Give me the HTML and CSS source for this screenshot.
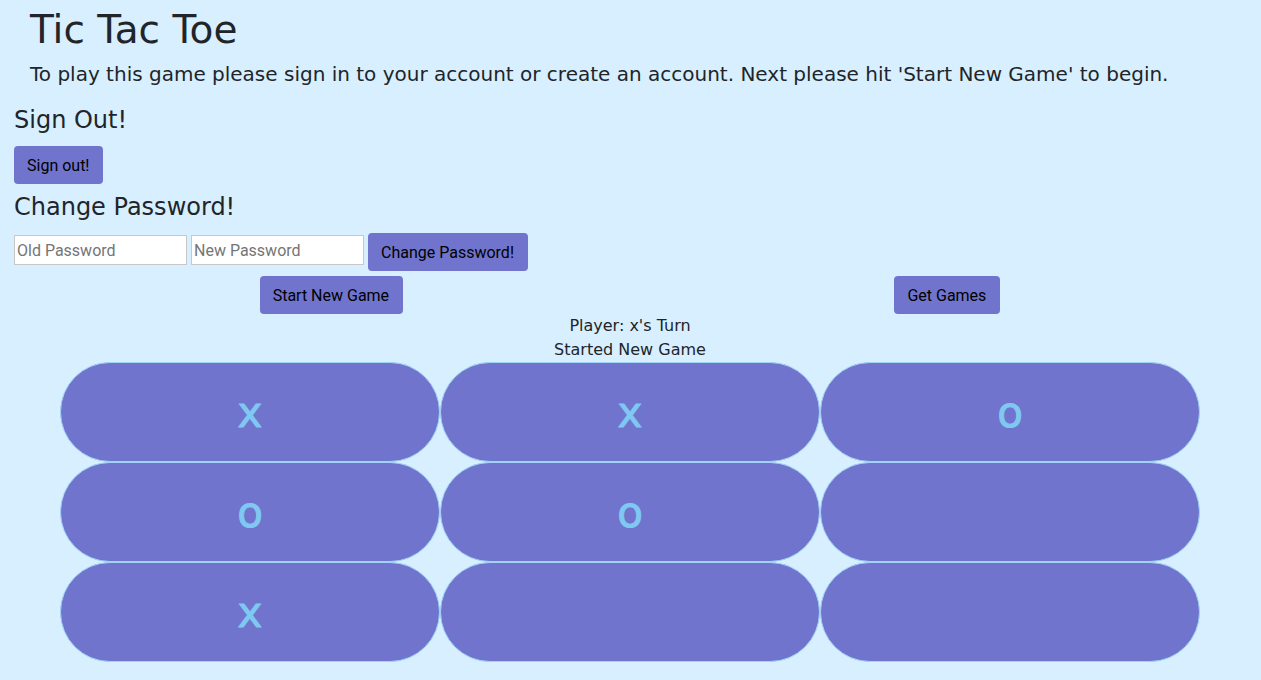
FILE: index.html
```html
<!DOCTYPE html>
<html lang="en">
<head>
<meta charset="utf-8">
<title>Tic Tac Toe</title>
<link rel="stylesheet" href="styles.css">
</head>
<body>
<header class="intro">
  <h1 class="title">Tic Tac Toe</h1>
  <p class="lead">To play this game please sign in to your account or create an account. Next please hit 'Start New Game' to begin.</p>
</header>
<main>
  <section class="account">
    <h2 class="heading">Sign Out!</h2>
    <form class="form"><button class="btn" type="button">Sign out!</button></form>
    <h2 class="heading">Change Password!</h2>
    <form class="form">
      <input class="field" type="password" placeholder="Old Password" aria-label="Old Password">
      <input class="field" type="password" placeholder="New Password" aria-label="New Password">
      <button class="btn" type="button">Change Password!</button>
    </form>
    <div class="controls">
      <button class="btn" type="button">Start New Game</button>
      <button class="btn" type="button">Get Games</button>
    </div>
  </section>
  <div class="status">
    <p class="message">Player: x's Turn</p>
    <p class="message">Started New Game</p>
  </div>
  <div class="board">
    <button class="cell" type="button">x</button>
    <button class="cell" type="button">x</button>
    <button class="cell" type="button">o</button>
    <button class="cell" type="button">o</button>
    <button class="cell" type="button">o</button>
    <button class="cell" type="button" aria-label="Empty"></button>
    <button class="cell" type="button">x</button>
    <button class="cell" type="button" aria-label="Empty"></button>
    <button class="cell" type="button" aria-label="Empty"></button>
  </div>
</main>
</body>
</html>
```
FILE: styles.css
```css
* { box-sizing: border-box; }
body {
  margin: 0;
  padding: 6px 15px 18px 14px;
  background: #d7efff;
  color: #212529;
  font: 16px/24px "DejaVu Sans", sans-serif;
}
.intro { padding: 0 16px; }
.title { margin: 0 0 5px; font-size: 39px; line-height: 48px; font-weight: 400; }
.lead { margin: 0 0 17px; font-size: 20px; line-height: 30px; }
.heading { margin: 0 0 11px; font-size: 24px; line-height: 29px; font-weight: 400; }
.form { display: flex; align-items: flex-start; gap: 4px; margin-bottom: 9px; }
.form:last-of-type { margin-bottom: 5px; }
.btn {
  padding: 7px 13px 5px;
  border: 0;
  min-height: 38px;
  border-radius: 4px;
  background: #7074cc;
  color: #000;
  font: 16px/24px Roboto, sans-serif;
}
.account .btn { padding-right: 14px; }
.field {
  width: 173px;
  height: 30px;
  margin-top: 2px;
  padding: 1px 2px;
  border: 1px solid #c8c8c8;
  background: #fff;
  font: 16px/24px Roboto, sans-serif;
}
.field::placeholder { color: #757575; }
.controls { display: flex; justify-content: space-around; }
.status { text-align: center; }
.message { margin: 0; }
.board {
  display: grid;
  grid-template-columns: repeat(3, 1fr);
  max-width: 1140px;
  margin: 0 auto;
}
.cell {
  height: 100px;
  padding: 2px 0 0;
  border: 1px solid #9fd3f8;
  border-radius: 50px;
  background: #7074cc;
  color: #7fc8f2;
  font: 42px/60px "DejaVu Sans", sans-serif;
  -webkit-text-stroke: 1px #7fc8f2;
}
```
